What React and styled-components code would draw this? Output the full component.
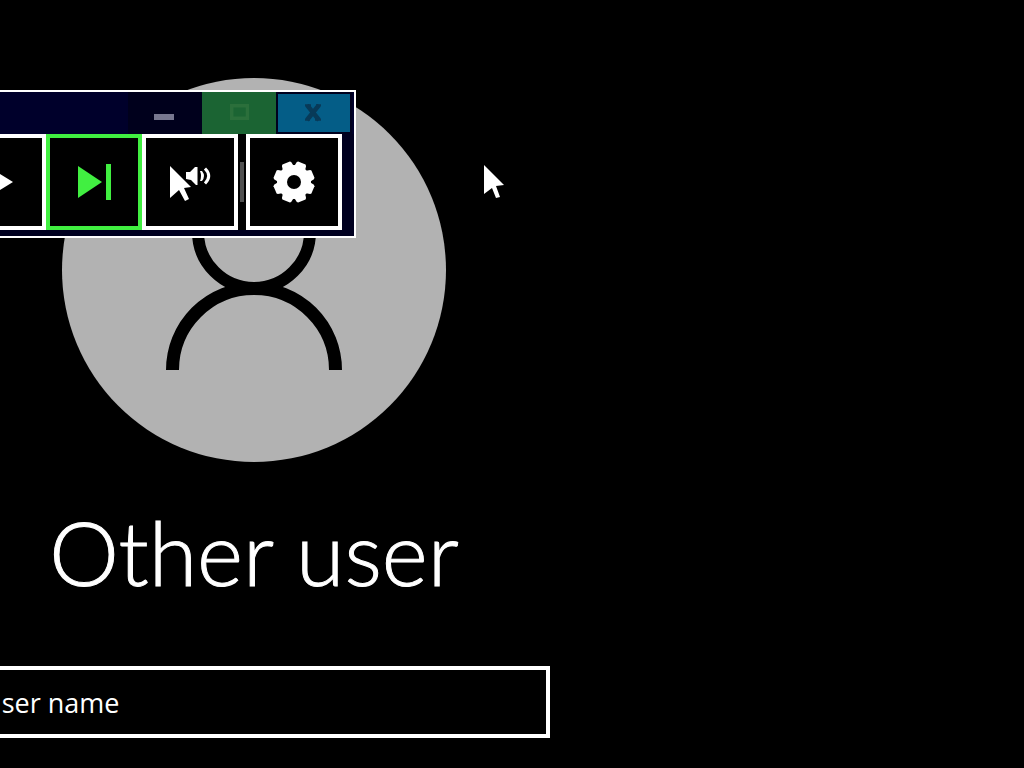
import styled, { createGlobalStyle } from "styled-components";

const GlobalStyle = createGlobalStyle`
    * {
        box-sizing: border-box;
    }
    body {
        margin: 0;
        background: #000;
        overflow: hidden;
    }
`
const Page = styled.main`
    position: relative;
    min-height: 100vh;
    overflow: hidden;
    background: #000;
    color: #fff;
    font-family: "Open Sans", "Noto Sans", sans-serif;
`
const LoginForm = styled.form`
    display: flex;
    flex-direction: column;
    align-items: center;
    width: 100%;
    max-width: 592px;
    margin-left: -42px;
    padding-top: 78px;
`
const Avatar = styled.svg`
    display: block;
    width: 384px;
    height: 384px;
    border-radius: 50%;
    background: #b2b2b2;
`
const UserTitle = styled.h1`
    margin: 26px 0 50px;
    font-family: Lato, "Open Sans", sans-serif;
    font-size: 88px;
    font-weight: 300;
    line-height: 128px;
    white-space: nowrap;
    -webkit-text-stroke: 1px #fff;
`
const UserInput = styled.input`
    width: 100%;
    height: 72px;
    padding: 0 20px;
    border: 4px solid #fff;
    border-radius: 0;
    outline: none;
    background: #000;
    color: #fff;
    font-family: inherit;
    font-size: 27px;

    &::placeholder {
        color: #fff;
        opacity: 1;
    }
`
const ReaderWindow = styled.section`
    position: absolute;
    top: 90px;
    left: -52px;
    width: 408px;
    border: 2px solid #fff;
    background: #000020;
`
const TitleBar = styled.header`
    display: flex;
    justify-content: flex-end;
    height: 42px;
    padding-right: 2px;
    background: #00002b;
`
const WindowButton = styled.button`
    display: flex;
    align-items: center;
    justify-content: center;
    width: ${({ $edge }) => ($edge ? "76px" : "74px")};
    padding: 0;
    border: ${({ $edge }) => ($edge ? `2px solid ${$edge}` : "none")};
    background: ${({ $fill }) => $fill};
`
const Toolbar = styled.div`
    display: flex;
    align-items: center;
    width: 392px;
    margin-bottom: 6px;
    background: #000;
`
const ToolButton = styled.button`
    display: flex;
    align-items: center;
    justify-content: center;
    width: 96px;
    height: 96px;
    padding: 0;
    border: 4px solid currentColor;
    background: #000;
    color: ${({ $active }) => ($active ? "#41ef41" : "#fff")};
`
const Separator = styled.span`
    width: 4px;
    height: 40px;
    margin: 0 2px;
    background: #505050;
`
const Pointer = styled.svg`
    position: absolute;
    top: 165px;
    left: 484px;
`

const teeth = [0, 45, 90, 135, 180, 225, 270, 315];

const GearIcon = () => (
    <svg width="44" height="44" viewBox="-22 -22 44 44" fill="currentColor" aria-hidden="true">
        <circle r="17" />
        {teeth.map((angle) => (
            <path key={angle} d="M-6 -14L-5 -19.5L-4 -20.500H4L5 -19.5L6 -14Z" transform={`rotate(${angle + 22.5})`} />
        ))}
        <circle r="7" fill="#000" />
    </svg>
)

const App = () => {
    return (
        <Page>
            <GlobalStyle />
            <LoginForm onSubmit={(e) => e.preventDefault()}>
                <Avatar viewBox="0 0 384 384" fill="none" stroke="#000" aria-hidden="true">
                    <circle cx="192" cy="154" r="56" strokeWidth="12" />
                    <path d="M110.5 292A81.5 81.5 0 0 1 273.5 292" strokeWidth="13" />
                </Avatar>
                <UserTitle>Other user</UserTitle>
                <UserInput type="text" placeholder="User name" aria-label="User name" />
            </LoginForm>
            <ReaderWindow aria-label="Reader">
                <TitleBar>
                    <WindowButton $fill="#00001c" aria-label="Minimize">
                        <svg width="22" height="20" viewBox="0 0 22 20">
                            <path d="M0 11H20V17H0Z" fill="#77778f" />
                        </svg>
                    </WindowButton>
                    <WindowButton $fill="#1b6433" aria-label="Maximize">
                        <svg width="20" height="20" viewBox="0 0 20 20" fill="none">
                            <path d="M2.7 2.7H18.5V15.3H2.7Z" stroke="#2b6f3b" strokeWidth="3.5" />
                        </svg>
                    </WindowButton>
                    <WindowButton $fill="#045d87" $edge="#00001e" aria-label="Close">
                        <svg width="20" height="18" viewBox="0 0 20 18" fill="none">
                            <path d="M3 1L15 16M15 1L3 16" stroke="#083a58" strokeWidth="4.5" />
                            <path d="M1 1.2H7M12 1.2H17M1 15.8H6M11 15.8H17" stroke="#083a58" strokeWidth="2" />
                        </svg>
                    </WindowButton>
                </TitleBar>
                <Toolbar>
                    <ToolButton aria-label="Play">
                        <svg width="32" height="36" viewBox="0 0 32 36" fill="currentColor">
                            <path d="M5 2L31 18L5 34Z" />
                        </svg>
                    </ToolButton>
                    <ToolButton $active aria-label="Next">
                        <svg width="34" height="36" viewBox="0 0 34 36" fill="currentColor">
                            <path d="M1 2L25 18L1 34ZM29 0H34V36H29Z" />
                        </svg>
                    </ToolButton>
                    <ToolButton aria-label="Read at pointer">
                        <svg width="42" height="40" viewBox="0 0 42 40" fill="currentColor">
                            <path d="M1 4L22 25L15 26L20 37L16 39L10 28L1 36Z" />
                            <path d="M17 10H21L26 5H28.5V23H27L22 18L17 17Z" />
                            <path d="M31 9H33Q37 14 33 19H31Q33 14 31 9Z" />
                            <path d="M36 6.5Q43.5 14 36 21.5" fill="none" stroke="currentColor" strokeWidth="3" />
                        </svg>
                    </ToolButton>
                    <Separator />
                    <ToolButton aria-label="Settings">
                        <GearIcon />
                    </ToolButton>
                </Toolbar>
            </ReaderWindow>
            <Pointer width="22" height="36" viewBox="0 0 22 36" fill="#fff" aria-hidden="true">
                <path d="M0 0L20 20L12 21L16 32L12 33L8 23L0 29Z" />
            </Pointer>
        </Page>
    )
}

export default App;
